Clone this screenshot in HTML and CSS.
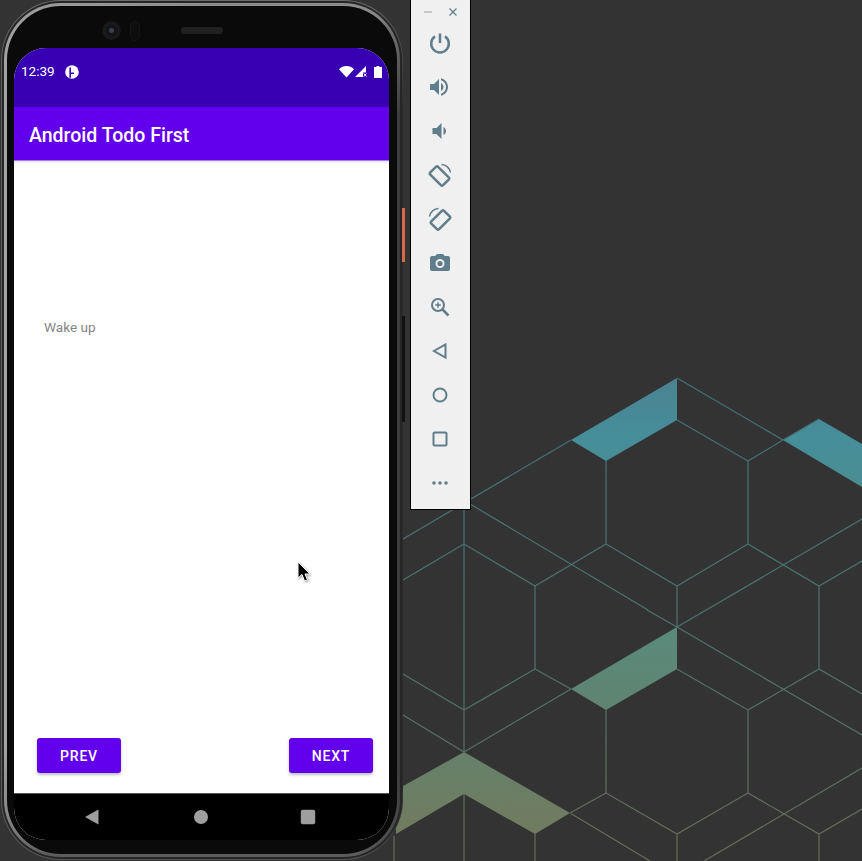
FILE: index.html
```html
<!DOCTYPE html>
<html lang="en">
<head>
<meta charset="utf-8">
<title>Android Todo First</title>
<link rel="stylesheet" href="styles.css">
</head>
<body>
<div class="desktop">
  <svg class="wallpaper" viewBox="0 0 862 861" aria-hidden="true">
    <defs>
      <linearGradient id="lineGrad" gradientUnits="userSpaceOnUse" x1="0" y1="378" x2="0" y2="861">
        <stop offset="0" stop-color="#3f7176"/>
        <stop offset="0.6" stop-color="#4f736c"/>
        <stop offset="1" stop-color="#666c55"/>
      </linearGradient>
      <linearGradient id="fillGrad" gradientUnits="userSpaceOnUse" x1="0" y1="378" x2="0" y2="861">
        <stop offset="0" stop-color="#4b8290"/>
        <stop offset="0.12" stop-color="#458e9a"/>
        <stop offset="0.52" stop-color="#5a8a7c"/>
        <stop offset="0.7" stop-color="#608370"/>
        <stop offset="1" stop-color="#75795a"/>
      </linearGradient>
    </defs>
    <path class="shard" d="M571 440 677 378V420L606 461Z"/>
    <path class="shard" d="M783 440 819 419 862 444V487Z"/>
    <path class="shard" d="M571 689 677 627V669L606 710Z"/>
    <path class="shard" d="M396 790 464 752 570 813 535 834 464 794 396 834Z"/>
    <path class="mesh" d="M403 539 571 440M677 378 783 440 748 461M783 440 819 419M606 461V544L677 586 748 544V461L677 420M464 507V752M470 504 648 610M464 544 403 580M464 544 535 586 606 544M535 586V669M748 544 819 586 862 561M819 586V669M677 586V627M862 519 677 627M647 610 677 627 783 689 862 735M677 669 748 710V793L677 834 606 793V710M535 669 464 710 403 674M535 669 571 689M748 710 819 669 862 694M403 715 464 752 571 689M570 813 606 793M570 813 650 861M748 793 819 834 862 809M819 834V861M677 834V861M862 768 704 861M464 794V861M535 834V861M394 836V861"/>
  </svg>

  <div class="phone">
    <div class="phone-band">
      <div class="phone-rim">
        <div class="bezel">
          <div class="screen">
            <div class="status-bar">
              <div class="status-left">
                <span class="clock">12:39</span>
                <svg class="notif" viewBox="0 0 14 14" aria-hidden="true">
                  <circle class="glyph-white" cx="7" cy="7" r="6.8"/>
                  <path class="glyph-indigo" d="M4.400 2.600H6V12.800H4.400Z"/>
                  <path class="glyph-indigo" d="M6 7.600H9V9H6Z"/>
                </svg>
              </div>
              <div class="status-right">
                <svg class="wifi" viewBox="0 0 15 12" aria-hidden="true">
                  <path class="glyph-white" d="M0 3.200C4-1 11-1 15 3.200L7.500 11.500Z"/>
                </svg>
                <svg class="signal" viewBox="0 0 12 11" aria-hidden="true">
                  <path class="glyph-white" d="M0 11 11 0V6.500H8V11Z"/>
                  <path class="cross" d="M8.800 7.500 11.500 10.500M11.500 7.500 8.800 10.500"/>
                </svg>
                <svg class="battery" viewBox="0 0 8 12" aria-hidden="true">
                  <path class="glyph-white" d="M2.500 0H5.500V1H8V12H0V1H2.500Z"/>
                </svg>
              </div>
            </div>
            <header class="app-bar">Android Todo First</header>
            <main class="content">
              <p class="task">Wake up</p>
              <div class="actions">
                <button class="btn" type="button">PREV</button>
                <button class="btn" type="button">NEXT</button>
              </div>
            </main>
            <nav class="nav-bar">
              <svg class="nav-icon" viewBox="0 0 16 16" aria-hidden="true"><path d="M13.500 0.500V15.500L0 8Z"/></svg>
              <svg class="nav-icon" viewBox="0 0 16 16" aria-hidden="true"><circle cx="8" cy="8" r="7"/></svg>
              <svg class="nav-icon" viewBox="0 0 16 16" aria-hidden="true"><rect x="0.800" y="0.800" width="14.400" height="14.400" rx="2"/></svg>
            </nav>
          </div>
        </div>
      </div>
    </div>
    <span class="lens"></span>
    <span class="sensor"></span>
    <span class="speaker"></span>
    <span class="side-key side-key-power"></span>
    <span class="side-key side-key-volume"></span>
    <svg class="cursor" viewBox="0 0 16 24" aria-hidden="true">
      <path d="M1 1V17L5 13.500 7.500 20 10.500 18.800 8 13H13Z"/>
    </svg>
  </div>

  <aside class="toolbar">
    <div class="window-controls">
      <svg class="win-icon" viewBox="0 0 10 10" aria-hidden="true"><path d="M1 5H9"/></svg>
      <svg class="win-icon" viewBox="0 0 10 10" aria-hidden="true"><path d="M1.500 1.500 8.500 8.500M8.500 1.500 1.500 8.500"/></svg>
    </div>
    <div class="tool"><svg viewBox="0 0 24 24" aria-hidden="true"><path class="line bold" d="M12 2.500V12M7 5.400A8.800 8.800 0 1 0 17 5.400"/></svg></div>
    <div class="tool"><svg viewBox="0 0 24 24" aria-hidden="true"><path class="solid" d="M2 9v6h4l5 5V4L6 9H2zm13.500 3c0-1.770-1.020-3.290-2.500-4.030v8.050c1.480-.73 2.500-2.250 2.500-4.020zM13 3.230v2.060c2.890.86 5 3.540 5 6.710s-2.110 5.850-5 6.710v2.060c4.010-.91 7-4.490 7-8.770s-2.990-7.860-7-8.770z"/></svg></div>
    <div class="tool"><svg viewBox="0 0 24 24" aria-hidden="true"><path class="solid" d="M18 12c0-1.770-1.020-3.290-2.500-4.030v8.050c1.480-.73 2.500-2.250 2.500-4.020zM4.500 9v6h4l5 5V4l-5 5h-4z"/></svg></div>
    <div class="tool"><svg viewBox="0 0 24 24" aria-hidden="true"><rect class="line bold" x="2.500" y="7.500" width="18" height="11" rx="1.500" transform="rotate(45 11.500 13)"/><path class="line thin" d="M13.500 1.500A9.500 9.500 0 0 1 22.500 9.500"/></svg></div>
    <div class="tool"><svg viewBox="0 0 24 24" aria-hidden="true"><rect class="line bold" x="3.500" y="7.500" width="18" height="11" rx="1.500" transform="rotate(-45 12.500 13)"/><path class="line thin" d="M10.500 1.500A9.500 9.500 0 0 0 1.500 9.500"/></svg></div>
    <div class="tool"><svg viewBox="0 0 24 24" aria-hidden="true"><path class="solid" fill-rule="evenodd" d="M9 3 7.200 5H4a2 2 0 0 0-2 2v11a2 2 0 0 0 2 2h16a2 2 0 0 0 2-2V7a2 2 0 0 0-2-2h-3.200L15 3H9zm3 14a4.500 4.500 0 1 1 0-9 4.500 4.500 0 0 1 0 9z"/><circle class="solid" cx="12" cy="12.500" r="2.600"/></svg></div>
    <div class="tool"><svg viewBox="0 0 24 24" aria-hidden="true"><circle class="line" cx="10" cy="10" r="6"/><path class="line bold" d="M14.500 14.500 20.500 20.500"/><path class="line thin" d="M10 7.200V12.800M7.200 10H12.800"/></svg></div>
    <div class="tool"><svg viewBox="0 0 24 24" aria-hidden="true"><path class="line" d="M17.500 5.500V18.500L6 12Z"/></svg></div>
    <div class="tool"><svg viewBox="0 0 24 24" aria-hidden="true"><circle class="line" cx="12" cy="12" r="6.500"/></svg></div>
    <div class="tool"><svg viewBox="0 0 24 24" aria-hidden="true"><rect class="line" x="5.500" y="5.500" width="13" height="13" rx="1"/></svg></div>
    <div class="tool"><svg viewBox="0 0 24 24" aria-hidden="true"><circle class="solid" cx="6" cy="12" r="1.800"/><circle class="solid" cx="12" cy="12" r="1.800"/><circle class="solid" cx="18" cy="12" r="1.800"/></svg></div>
  </aside>
</div>
</body>
</html>
```
FILE: styles.css
```css
* { box-sizing: border-box; }
html, body { margin: 0; padding: 0; }
body { background: #333; overflow: hidden; }

.desktop {
  position: relative;
  width: 862px;
  height: 861px;
  background: #333;
  overflow: hidden;
  font-family: Roboto, "Liberation Sans", sans-serif;
}

.wallpaper { position: absolute; inset: 0; width: 862px; height: 861px; }
.shard { fill: url(#fillGrad); }
.mesh { fill: none; stroke: url(#lineGrad); stroke-width: 1.2; }

/* phone: outer hairline, dark band, lit metal rim, black bezel */
.phone {
  position: absolute;
  left: 1px;
  top: 0;
  width: 402px;
  height: 860px;
  padding: 1px;
  border-radius: 60px;
  background: conic-gradient(#6a6a6a 0 22deg, #2c2c2c 32deg 150deg, #555 160deg 200deg, #5c5c5c 212deg 330deg, #6a6a6a 340deg);
}
.phone-band {
  height: 100%;
  padding: 2px;
  border-radius: 59px;
  background: #262626;
}
.phone-rim {
  height: 100%;
  padding: 3px;
  border-radius: 57px;
  background: conic-gradient(#8c8c8c 0 22deg, #3c3c3c 32deg 150deg, #5c5c5c 160deg 200deg, #a4a4a4 212deg 330deg, #9a9a9a 340deg, #8c8c8c 360deg);
}
.bezel {
  height: 100%;
  padding: 42px 8px 14px 7px;
  border-radius: 54px;
  background: #0a0a0b;
}
.lens {
  position: absolute;
  left: 101px; top: 21px;
  width: 19px; height: 19px;
  border-radius: 50%;
  background: radial-gradient(circle, #3b4050 0 2px, #141416 3px 6px, #1c1c1c 7px, #101010 10px);
}
.sensor {
  position: absolute;
  left: 129px; top: 21px;
  width: 10px; height: 20px;
  border-radius: 5px;
  background: #0e0e0e;
  border: 1px solid #161616;
}
.speaker {
  position: absolute;
  left: 180px; top: 27px;
  width: 42px; height: 7px;
  border-radius: 4px;
  background: #202020;
}
.side-key { position: absolute; left: 401px; width: 3px; }
.side-key-power { top: 208px; height: 54px; background: #d4694c; }
.side-key-volume { top: 316px; height: 106px; background: #111; }

.screen {
  height: 100%;
  display: flex;
  flex-direction: column;
  border-radius: 32px;
  overflow: hidden;
  background: #fff;
}
.status-bar {
  height: 59px;
  flex: none;
  display: flex;
  justify-content: space-between;
  align-items: flex-start;
  padding: 15px 7px 0 7px;
  background: #3700b3;
  color: #fff;
}
.status-left { display: flex; align-items: center; gap: 10px; height: 17px; }
.clock { font-size: 13.5px; line-height: 17px; }
.notif { width: 14px; height: 14px; }
.status-right { display: flex; align-items: center; gap: 1px; height: 17px; }
.wifi { width: 15px; height: 12px; }
.signal { width: 12px; height: 11px; }
.battery { width: 8px; height: 12px; margin-left: 6px; }
.glyph-white { fill: #fff; }
.glyph-indigo { fill: #3700b3; }
.cross { fill: none; stroke: #fff; stroke-width: 1; }

.app-bar {
  height: 54px;
  flex: none;
  display: flex;
  align-items: center;
  padding: 3px 0 0 15px;
  background: #6200ee;
  border-bottom: 1px solid #a678ee;
  color: #fff;
  font-size: 19.5px;
  font-weight: 500;
}
.content {
  flex: 1;
  min-height: 0;
  display: flex;
  flex-direction: column;
  justify-content: space-between;
  padding: 0 16px 20px 23px;
  box-shadow: inset 0 4px 3px -3px rgba(0, 0, 0, 0.12);
}
.task {
  margin: 157px 0 0 7px;
  color: #858585;
  font-size: 13.6px;
  line-height: 18px;
}
.actions { display: flex; justify-content: space-between; }
.btn {
  width: 84px;
  height: 35px;
  border: 0;
  border-radius: 3px;
  background: #6200ee;
  color: #fff;
  font: 500 14px Roboto, "Liberation Sans", sans-serif;
  letter-spacing: 0.8px;
  box-shadow: 0 2px 3px rgba(0, 0, 0, 0.25);
}
.nav-bar {
  height: 47px;
  flex: none;
  display: flex;
  align-items: center;
  padding: 0 73px 0 71px;
  justify-content: space-between;
  background: #000;
  border-top: 1px solid #555;
}
.nav-icon { width: 16px; height: 16px; fill: #9e9e9e; }

.cursor {
  position: absolute;
  left: 296px;
  top: 561px;
  width: 16px;
  height: 24px;
  fill: #000;
  stroke: #fff;
  stroke-width: 1;
  filter: drop-shadow(1px 1px 1px rgba(0, 0, 0, 0.4));
}

/* emulator toolbar */
.toolbar {
  position: absolute;
  left: 410px;
  top: 0;
  width: 61px;
  height: 510px;
  background: #f0f0f0;
  border: 1px solid #000;
  border-top: 0;
}
.window-controls {
  height: 21px;
  display: flex;
  justify-content: space-between;
  align-items: center;
  padding: 3px 12px 0 12px;
}
.win-icon { width: 10px; height: 10px; fill: none; stroke: #607d8b; stroke-width: 1.2; }
.window-controls .win-icon:first-child { stroke: #a0aeb6; }
.tool { height: 44px; display: flex; align-items: center; justify-content: center; padding-right: 1px; }
.tool svg { width: 24px; height: 24px; }
.line { fill: none; stroke: #607d8b; stroke-width: 2; }
.line.thin { stroke-width: 1.5; }
.line.bold { stroke-width: 2.5; }
.solid { fill: #607d8b; }
```
